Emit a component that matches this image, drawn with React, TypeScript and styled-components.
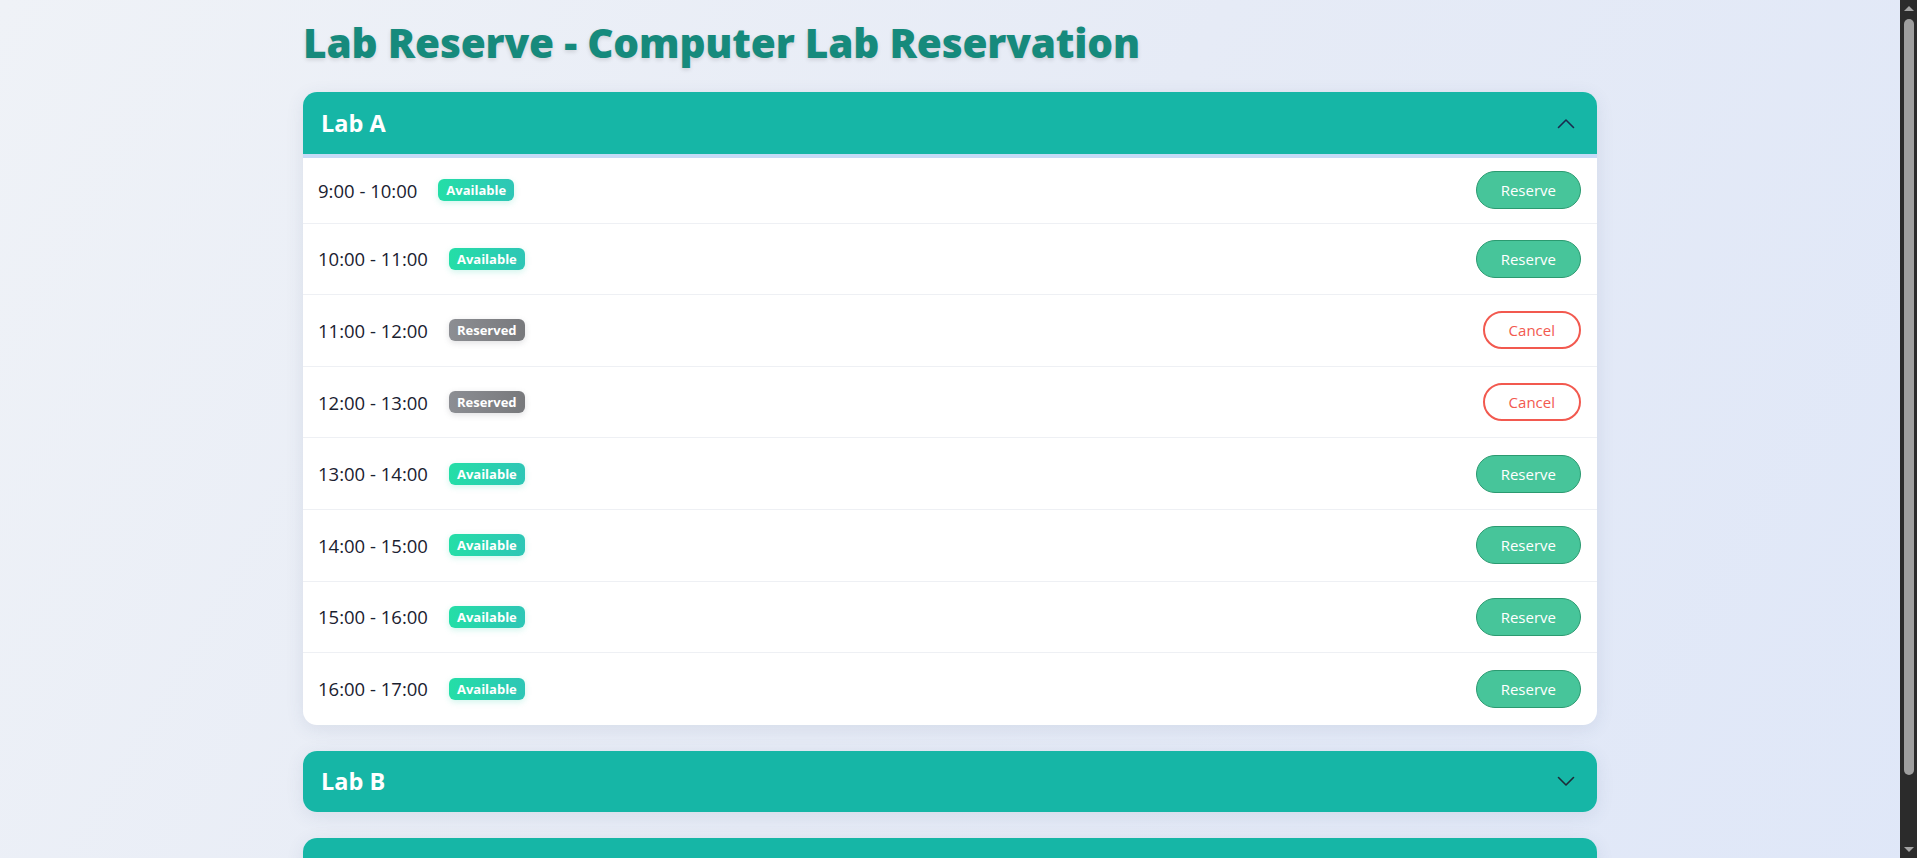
import React, { useState } from "react";
import styled, { createGlobalStyle } from "styled-components";

const GlobalStyle = createGlobalStyle`
  html, body {
    margin: 0;
    padding: 0;
  }
  body {
    font-family: "Open Sans", "Noto Sans", sans-serif;
    background: linear-gradient(120deg, #eff2f7 0%, #e6ebf6 50%, #dfe7f8 100%);
    min-height: 100vh;
    padding-right: 17px;
  }
`;

const Page = styled.div`
  padding: 19px 0 38px;
`;

const Container = styled.main`
  width: 1294px;
  margin: 0 auto;
`;

const Title = styled.h1`
  margin: 0 0 25px;
  font-size: 40.6px;
  line-height: 48px;
  font-weight: 800;
  color: #168a7c;
  letter-spacing: -0.2px;
  text-shadow: 0 2px 4px rgba(0, 0, 0, 0.12);
`;

const LabList = styled.div`
  display: flex;
  flex-direction: column;
  gap: 26px;
`;

const Card = styled.section`
  border-radius: 14px;
  overflow: hidden;
  background: #ffffff;
  box-shadow: 0 4px 18px rgba(60, 80, 120, 0.1);
`;

const Header = styled.button<{ $open: boolean }>`
  display: flex;
  align-items: center;
  justify-content: space-between;
  width: 100%;
  height: ${(p) => (p.$open ? "66px" : "61px")};
  padding: 0 22px 0 18px;
  border: none;
  border-bottom: ${(p) => (p.$open ? "4px solid #c6dbf7" : "none")};
  box-sizing: border-box;
  background: #16b6a6;
  background-clip: padding-box;
  color: #ffffff;
  font-family: inherit;
  font-size: 23.5px;
  font-weight: 700;
  cursor: pointer;
  text-align: left;
`;

const Body = styled.div``;

const Row = styled.div`
  display: flex;
  align-items: center;
  justify-content: space-between;
  height: 71.6px;
  box-sizing: border-box;
  padding: 0 16px 0 15px;
  border-bottom: 1px solid #eef0f4;

  &:first-child {
    height: 65.6px;
  }
  &:last-child {
    border-bottom: none;
  }
`;

const SlotInfo = styled.div`
  display: flex;
  align-items: center;
  gap: 21px;
`;

const Time = styled.span`
  font-size: 18.5px;
  font-weight: 500;
  color: #1a2130;
`;

const Badge = styled.span<{ $reserved: boolean }>`
  display: inline-flex;
  align-items: center;
  height: 22px;
  padding: 0 8px;
  border-radius: 6px;
  font-size: 13px;
  font-weight: 700;
  color: #ffffff;
  background: ${(p) =>
    p.$reserved
      ? "linear-gradient(90deg, #8c8e93, #78797c)"
      : "linear-gradient(90deg, #24dea7, #2ec6b6)"};
  box-shadow: ${(p) =>
    p.$reserved
      ? "0 2px 6px rgba(100, 100, 110, 0.2)"
      : "0 2px 6px rgba(40, 210, 170, 0.22)"};
`;

const ActionButton = styled.button<{ $variant: "reserve" | "cancel" }>`
  height: 38px;
  padding: 0 24px;
  border-radius: 999px;
  font-family: inherit;
  font-size: 15px;
  cursor: pointer;
  box-sizing: border-box;
  border: ${(p) => (p.$variant === "reserve" ? "1px solid #2b9a70" : "2px solid #f2594f")};
  background: ${(p) => (p.$variant === "reserve" ? "#47c59a" : "#ffffff")};
  color: ${(p) => (p.$variant === "reserve" ? "#ffffff" : "#f2594f")};
  min-width: 97px;
`;

/* Imitation of the browser's dark scrollbar, drawn over the right edge */
const ScrollTrack = styled.div`
  position: fixed;
  top: 0;
  right: 0;
  bottom: 0;
  width: 17px;
  background: #2b2b2b;
  display: flex;
  flex-direction: column;
  align-items: center;
`;

const ScrollArrow = styled.div<{ $down?: boolean }>`
  height: 17px;
  width: 17px;
  display: flex;
  align-items: center;
  justify-content: center;
  &::before {
    content: "";
    width: 0;
    height: 0;
    border-left: 5px solid transparent;
    border-right: 5px solid transparent;
    ${(p) => (p.$down ? "border-top: 5px solid #a3a3a3;" : "border-bottom: 5px solid #a3a3a3;")}
  }
`;

const ScrollThumb = styled.div`
  width: 10px;
  margin-left: 1px;
  height: 756px;
  margin-top: 2px;
  border-radius: 5px;
  background: #9f9f9f;
`;

const ScrollSpacer = styled.div`
  flex: 1;
`;

const Chevron = ({ up }: { up: boolean }) => (
  <svg width="18" height="11" viewBox="0 0 18 11" fill="none">
    <polyline
      points={up ? "1.5,9.5 9,2 16.5,9.5" : "1.5,1.5 9,9 16.5,1.5"}
      stroke={up ? "#1b2b4e" : "#1f2a36"}
      strokeWidth="1.6"
      strokeLinecap="round"
      strokeLinejoin="round"
    />
  </svg>
);

type Slot = { time: string; reserved: boolean };

const slotsA: Slot[] = [
  { time: "9:00 - 10:00", reserved: false },
  { time: "10:00 - 11:00", reserved: false },
  { time: "11:00 - 12:00", reserved: true },
  { time: "12:00 - 13:00", reserved: true },
  { time: "13:00 - 14:00", reserved: false },
  { time: "14:00 - 15:00", reserved: false },
  { time: "15:00 - 16:00", reserved: false },
  { time: "16:00 - 17:00", reserved: false },
];

const labs = [
  { name: "Lab A", slots: slotsA },
  { name: "Lab B", slots: slotsA.map((s) => ({ ...s, reserved: false })) },
  { name: "Lab C", slots: slotsA.map((s) => ({ ...s, reserved: false })) },
];

export default function App() {
  const [open, setOpen] = useState<string | null>("Lab A");
  const [data, setData] = useState(labs);

  const toggleSlot = (lab: string, idx: number) => {
    setData((d) =>
      d.map((l) =>
        l.name !== lab
          ? l
          : { ...l, slots: l.slots.map((s, i) => (i === idx ? { ...s, reserved: !s.reserved } : s)) }
      )
    );
  };

  return (
    <>
      <GlobalStyle />
      <Page>
        <Container>
          <Title>Lab Reserve - Computer Lab Reservation</Title>
          <LabList>
            {data.map((lab) => {
              const isOpen = open === lab.name;
              return (
                <Card key={lab.name}>
                  <Header $open={isOpen} onClick={() => setOpen(isOpen ? null : lab.name)}>
                    <span>{lab.name}</span>
                    <Chevron up={isOpen} />
                  </Header>
                  {isOpen && (
                    <Body>
                      {lab.slots.map((s, i) => (
                        <Row key={s.time}>
                          <SlotInfo>
                            <Time>{s.time}</Time>
                            <Badge $reserved={s.reserved}>{s.reserved ? "Reserved" : "Available"}</Badge>
                          </SlotInfo>
                          <ActionButton
                            $variant={s.reserved ? "cancel" : "reserve"}
                            onClick={() => toggleSlot(lab.name, i)}
                          >
                            {s.reserved ? "Cancel" : "Reserve"}
                          </ActionButton>
                        </Row>
                      ))}
                    </Body>
                  )}
                </Card>
              );
            })}
          </LabList>
        </Container>
      </Page>
      <ScrollTrack aria-hidden="true">
        <ScrollArrow />
        <ScrollThumb />
        <ScrollSpacer />
        <ScrollArrow $down />
      </ScrollTrack>
    </>
  );
}
